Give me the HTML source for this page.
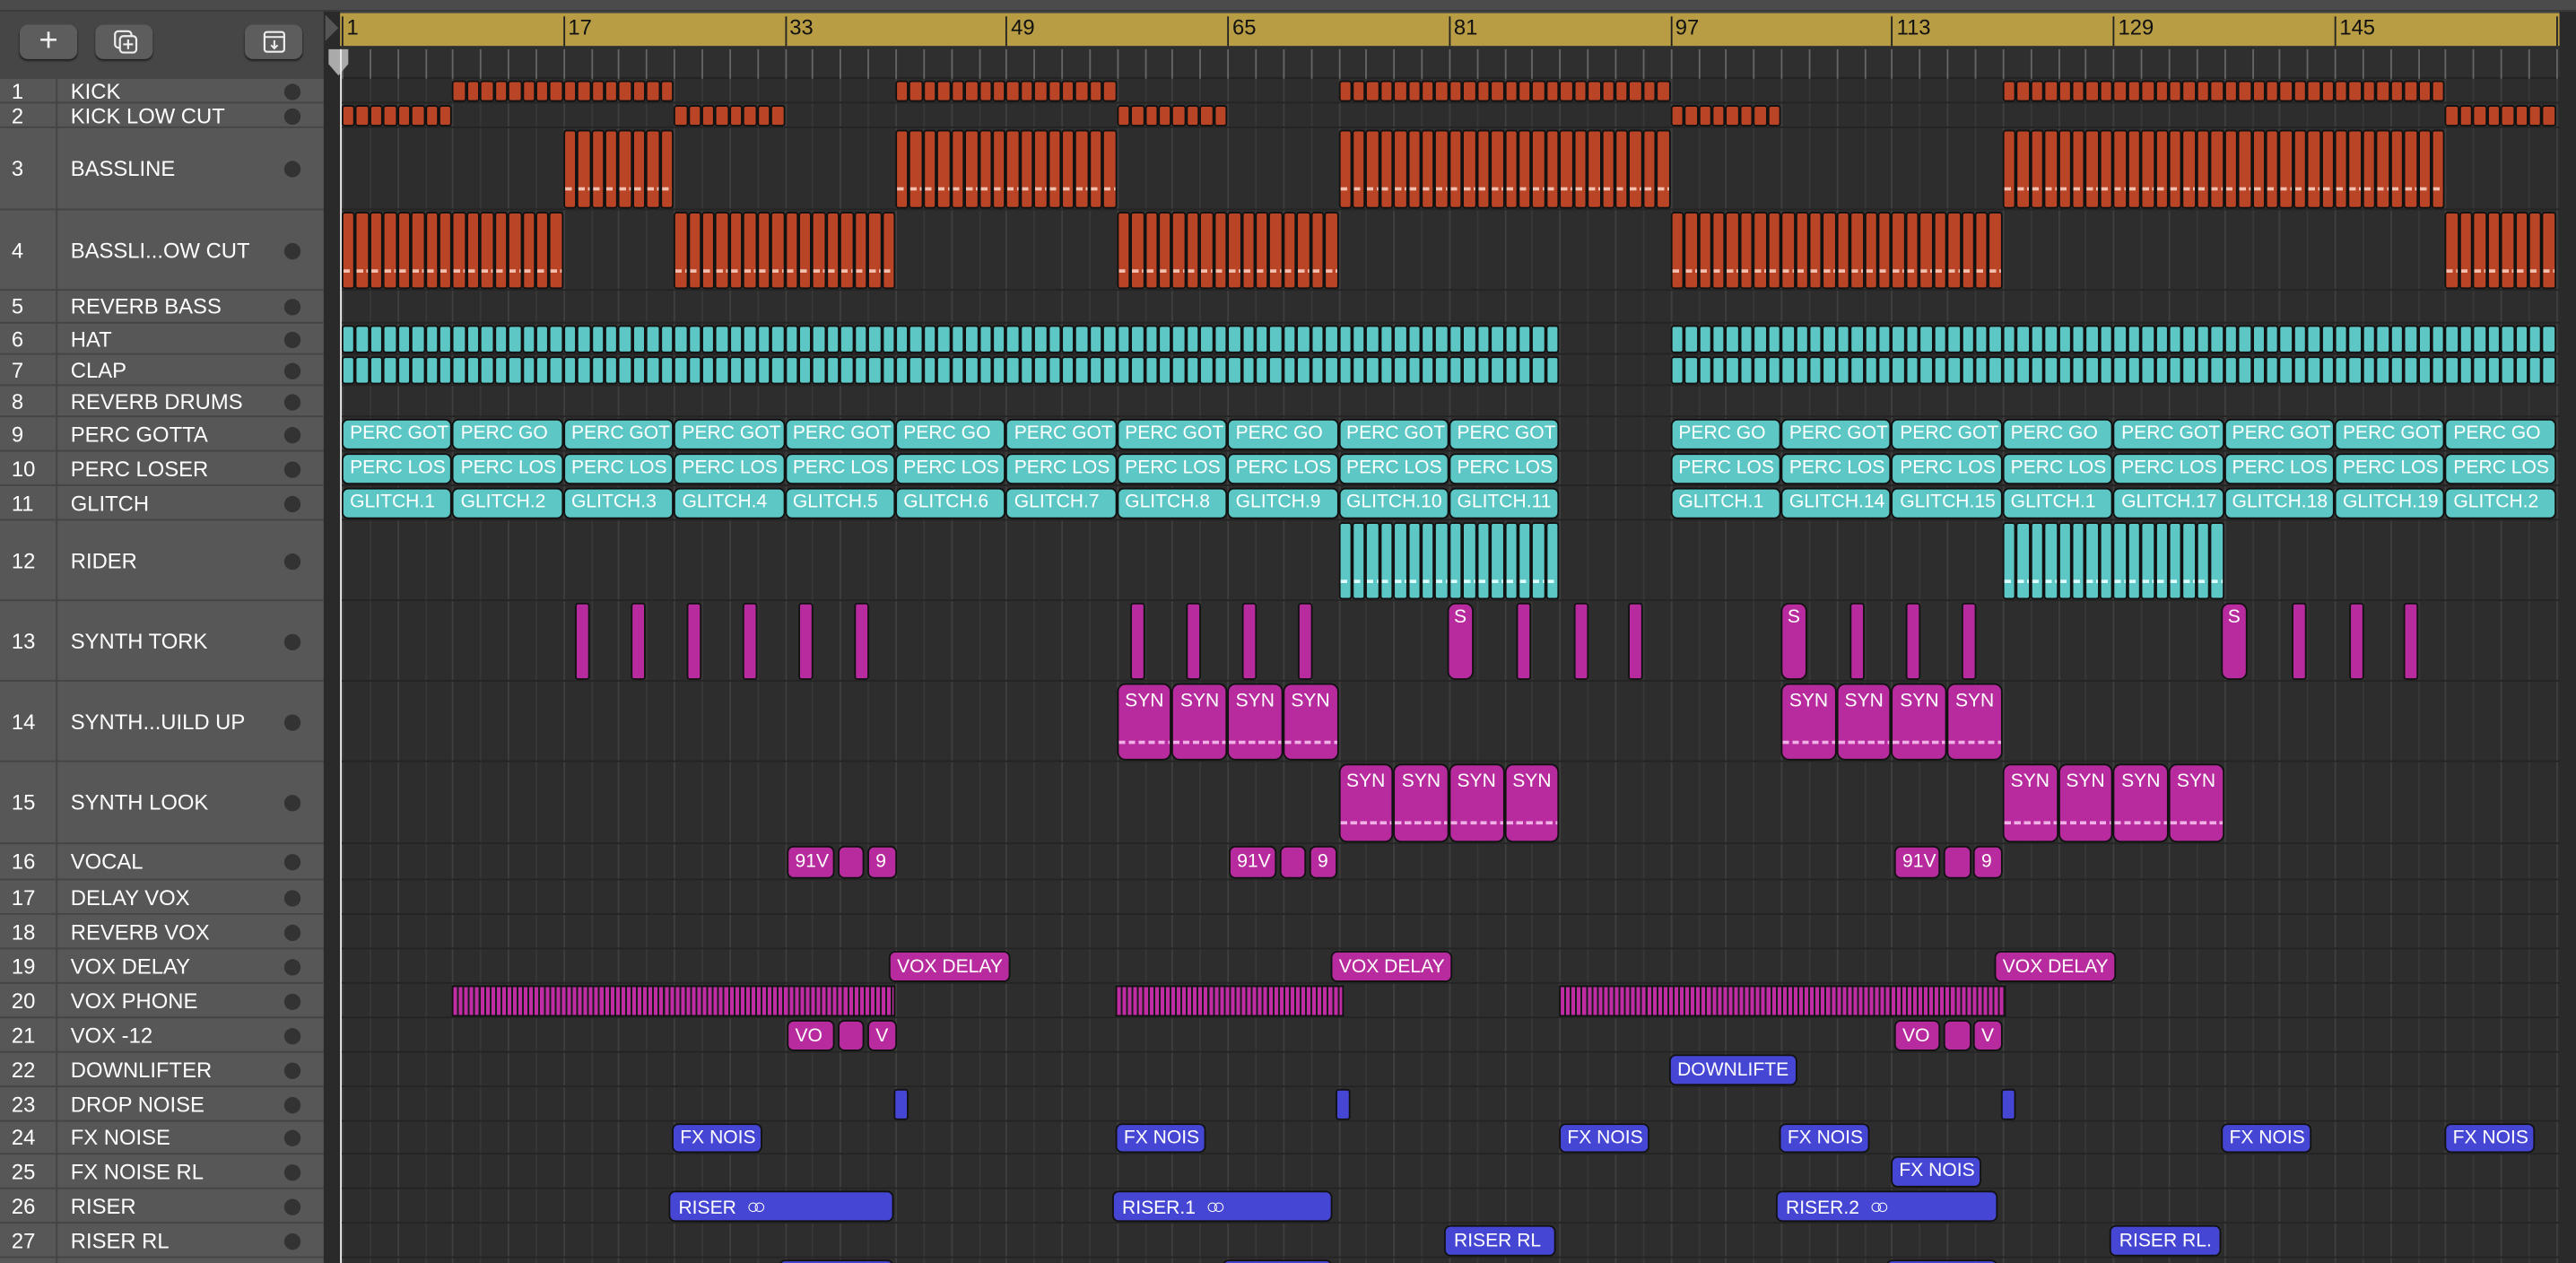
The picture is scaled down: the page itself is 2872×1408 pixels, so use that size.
<!DOCTYPE html>
<html><head><meta charset="utf-8"><style>
html,body{margin:0;padding:0;background:#2d2d2d;width:2872px;height:1408px;overflow:hidden}
#w{position:absolute;left:0;top:0;width:1568px;height:769px;transform:scale(1.83163,1.8309);transform-origin:0 0;background:#2d2d2d;font-family:"Liberation Sans",sans-serif;overflow:hidden}
.a{position:absolute;box-sizing:border-box}
.c{position:absolute;box-sizing:border-box;border:1px solid #111;border-radius:2px;overflow:hidden;white-space:nowrap;color:#fff;font-size:11.5px;line-height:16px;padding-left:4px}
.o{background:#b94426}.cy{background:#5cc7c5;color:#fff}.m{background:#b82b9e}.b{background:#4646d4}
.tn{position:absolute;left:0;width:42px;text-align:left;padding-left:7px;color:#fff;font-size:13px;box-sizing:border-box}
.tl{position:absolute;left:43px;color:#fff;font-size:13px}
.dot{position:absolute;left:173px;width:10px;height:10px;border-radius:50%;background:#333}
.btn{position:absolute;top:15px;width:35px;height:21px;border-radius:5px;background:#5d5d5d;box-shadow:0 1px 1px #222;color:#eee;text-align:center}
</style></head><body><div id="w">
<div class="a" style="left:0;top:0;width:1568px;height:48px;background:#464646"></div>
<div class="a" style="left:0;top:0;width:1568px;height:7px;background:#4b4b4b;border-bottom:1px solid #3a3a3a"></div>
<div class="btn" style="left:12px;font-size:20px;line-height:21px">+</div>
<div class="btn" style="left:58px"><svg width="20" height="16" viewBox="0 0 20 16" style="margin-top:3px"><rect x="4" y="1" width="10" height="10" rx="2" fill="none" stroke="#eee" stroke-width="1.2"/><rect x="7" y="4" width="10" height="10" rx="2" fill="#5d5d5d" stroke="#eee" stroke-width="1.2"/><path d="M12 6v6M9 9h6" stroke="#eee" stroke-width="1.2"/></svg></div>
<div class="btn" style="left:149px"><svg width="16" height="16" viewBox="0 0 16 16" style="margin-top:3px"><rect x="2" y="1.5" width="12" height="12" rx="1.5" fill="none" stroke="#eee" stroke-width="1.2"/><path d="M2 4.5h12M8 6.5v5M6 9.5l2 2 2-2" fill="none" stroke="#eee" stroke-width="1.1"/></svg></div>
<div class="a" style="left:197px;top:7px;width:10px;height:762px;background:#2a2a2a"></div>
<div class="a" style="left:198px;top:9px;width:0;height:0;border-top:8px solid transparent;border-bottom:8px solid transparent;border-left:8px solid #555"></div>
<div class="a" style="left:207px;top:8px;width:1351px;height:20px;background:#b99d44"></div>
<div class="a" style="left:207px;top:28px;width:1351px;height:20px;background:#2f2f2f;border-bottom:1px solid #222"></div>
<div id="g"></div>
<div class="a" style="left:1558px;top:7px;width:10px;height:762px;background:#2a2a2a"></div>
<div class="a" style="left:197px;top:28px;width:18px;height:18px;"><svg width="18" height="20"><path d="M3 2h12v9l-6 7-6-7z" fill="#aaa"/></svg></div>
<div class="a" style="left:207px;top:30px;width:1px;height:739px;background:#eee"></div>
</div>
<script>
var g=document.getElementById('g'),h='';
function X(b){return 208+(b-1)*8.424}
var rows=[[48,63,'KICK'],[63,78,'KICK LOW CUT'],[78,128,'BASSLINE'],[128,177,'BASSLI...OW CUT'],[177,197,'REVERB BASS'],[197,216,'HAT'],[216,235,'CLAP'],[235,254,'REVERB DRUMS'],[254,275,'PERC GOTTA'],[275,296,'PERC LOSER'],[296,317,'GLITCH'],[317,366,'RIDER'],[366,415,'SYNTH TORK'],[415,464,'SYNTH...UILD UP'],[464,514,'SYNTH LOOK'],[514,536,'VOCAL'],[536,557,'DELAY VOX'],[557,578,'REVERB VOX'],[578,599,'VOX DELAY'],[599,620,'VOX PHONE'],[620,641,'VOX -12'],[641,662,'DOWNLIFTER'],[662,683,'DROP NOISE'],[683,703,'FX NOISE'],[703,724,'FX NOISE RL'],[724,745,'RISER'],[745,766,'RISER RL'],[766,790,'']];
for(var b=1;b<170;b+=16){var x=X(b);h+='<div class="a" style="left:'+x+'px;top:10px;width:1px;height:18px;background:#222"></div><div class="a" style="left:'+(x+3)+'px;top:8px;font-size:13px;line-height:18px;color:#111">'+b+'</div>';}
for(var b=1;b<170;b+=2){var x=X(b);h+='<div class="a" style="left:'+x+'px;top:30px;width:1px;height:18px;background:#666"></div><div class="a" style="left:'+x+'px;top:48px;width:1px;height:721px;background:'+((b-1)%4==0?'#3f3f3f':'#383838')+'"></div>';}
rows.forEach(function(r,i){
 var y=r[0],hh=r[1]-r[0];
 h+='<div class="a" style="left:0;top:'+y+'px;width:197px;height:'+hh+'px;background:#575757;border-bottom:1px solid #444"></div>';
 h+='<div class="a" style="left:34px;top:'+y+'px;width:1px;height:'+hh+'px;background:#444"></div>';
 h+='<div class="a" style="left:207px;top:'+(r[1]-1)+'px;width:1355px;height:1px;background:#242424"></div>';
 if(r[2]){var ty=y+hh/2-8;
 h+='<div class="tn" style="top:'+ty+'px;line-height:16px">'+(i+1)+'</div><div class="tl" style="top:'+ty+'px;line-height:16px">'+r[2]+'</div><div class="dot" style="top:'+(y+hh/2-5)+'px"></div>';}
});
function R(i){return rows[i]}
function clip(cls,x1,x2,ri,txt,dash,extra){var r=R(ri);var t=r[0]+1,hh=r[1]-r[0]-2;
 h+='<div class="c '+cls+'" style="left:'+x1+'px;top:'+t+'px;width:'+(x2-x1)+'px;height:'+hh+'px;'+(extra||'')+'">'+(txt||'')+(dash?'<div class="a" style="left:0;right:0;bottom:'+Math.round(hh*0.2)+'px;height:2px;background:repeating-linear-gradient(90deg,'+dash+' 0 4px,transparent 4px 6px)"></div>':'')+'</div>';}
function bars(cls,ri,b1,b2,step,dash){for(var b=b1;b<b2;b+=step)clip(cls,X(b),X(b+step),ri,'',dash)}
[[9,25],[41,57],[73,97],[121,153]].forEach(function(p){bars('o',0,p[0],p[1],1)});
[[1,9],[25,33],[57,65],[97,105],[153,161]].forEach(function(p){bars('o',1,p[0],p[1],1)});
[[17,25],[41,57],[73,97],[121,153]].forEach(function(p){bars('o',2,p[0],p[1],1,'#f4c0b0')});
[[1,17],[25,41],[57,73],[97,121],[153,161]].forEach(function(p){bars('o',3,p[0],p[1],1,'#f4c0b0')});
[[1,89],[97,161]].forEach(function(p){bars('cy',5,p[0],p[1],1);bars('cy',6,p[0],p[1],1)});
var pg=['PERC GOT','PERC GO','PERC GOT','PERC GOT','PERC GOT','PERC GO','PERC GOT','PERC GOT','PERC GO','PERC GOT','PERC GOT'];
var pg2=['PERC GO','PERC GOT','PERC GOT','PERC GO','PERC GOT','PERC GOT','PERC GOT','PERC GO'];
var gl=['GLITCH.1','GLITCH.2','GLITCH.3','GLITCH.4','GLITCH.5','GLITCH.6','GLITCH.7','GLITCH.8','GLITCH.9','GLITCH.10','GLITCH.11'];
var gl2=['GLITCH.1','GLITCH.14','GLITCH.15','GLITCH.1','GLITCH.17','GLITCH.18','GLITCH.19','GLITCH.2'];
for(var k=0;k<11;k++){var b=1+k*8;clip('cy',X(b),X(b+8),8,pg[k],0,'border-radius:4px');clip('cy',X(b),X(b+8),9,'PERC LOS',0,'border-radius:4px');clip('cy',X(b),X(b+8),10,gl[k],0,'border-radius:4px')}
for(var k=0;k<8;k++){var b=97+k*8;clip('cy',X(b),X(b+8),8,pg2[k],0,'border-radius:4px');clip('cy',X(b),X(b+8),9,'PERC LOS',0,'border-radius:4px');clip('cy',X(b),X(b+8),10,gl2[k],0,'border-radius:4px')}
bars('cy',11,73,89,1,'#dff');bars('cy',11,121,137,1,'#dff');
[350,384,418,452,486,520,688,722,756,790,923,958,991,1126,1160,1194,1395,1430,1463].forEach(function(x){clip('m',x,x+9,12)});
[881,1084,1352].forEach(function(x){clip('m',x,x+16,12,'S',0,'border-radius:5px;padding-left:3px')});
function syn(ri,b){for(var k=0;k<4;k++)clip('m',X(b+k*4),X(b+k*4+4),ri,'SYN','#f0b0e6','border-radius:5px;padding-top:2px')}
syn(13,57);syn(13,105);syn(14,73);syn(14,121);
[[479,508,'91V'],[510,526,''],[528,546,'9'],[748,777,'91V'],[779,795,''],[797,814,'9'],[1153,1181,'91V'],[1183,1200,''],[1201,1219,'9']].forEach(function(p){clip('m',p[0],p[1],15,p[2],0,'border-radius:4px;line-height:18px')});
[[479,508,'VO'],[510,526,''],[528,546,'V'],[1153,1181,'VO'],[1183,1200,''],[1201,1219,'V']].forEach(function(p){clip('m',p[0],p[1],20,p[2],0,'border-radius:4px;line-height:18px')});
[541,810,1214].forEach(function(x){clip('m',x,x+74,18,'VOX DELAY',0,'border-radius:4px;line-height:18px')});
[[275,545],[679,818],[949,1221]].forEach(function(p){var r=R(19);h+='<div class="a" style="left:'+p[0]+'px;top:'+(r[0]+1)+'px;width:'+(p[1]-p[0])+'px;height:'+(r[1]-r[0]-2)+'px;background:repeating-linear-gradient(90deg,#c02ca4 0 2.2px,#1a1a1a 2.2px 3.3px);border:1px solid #111"></div>'});
clip('b',1016,1094,21,'DOWNLIFTE',0,'border-radius:4px;line-height:18px');
[544,813,1218].forEach(function(x){clip('b',x,x+9,22)});
[409,679,949,1083,1352,1488].forEach(function(x){clip('b',x,x+55,23,'FX NOIS',0,'border-radius:4px;line-height:17px')});
clip('b',1151,1206,24,'FX NOIS',0,'border-radius:4px;line-height:17px');
var ring=' &nbsp;<span style="letter-spacing:-4px;font-size:13px">&#9675;&#9675;</span>';
clip('b',407,544,25,'RISER'+ring,0,'border-radius:4px;line-height:18px;padding-left:5px');
clip('b',677,811,25,'RISER.1'+ring,0,'border-radius:4px;line-height:18px;padding-left:5px');
clip('b',1081,1216,25,'RISER.2'+ring,0,'border-radius:4px;line-height:18px;padding-left:5px');
clip('b',879,947,26,'RISER RL',0,'border-radius:4px;line-height:18px;padding-left:5px');
clip('b',1284,1352,26,'RISER RL.',0,'border-radius:4px;line-height:18px;padding-left:5px');
[[474,544],[744,811],[1148,1216]].forEach(function(p){clip('b',p[0],p[1],27,'',0,'border-radius:4px')});
g.innerHTML=h;
</script>
</body></html>
